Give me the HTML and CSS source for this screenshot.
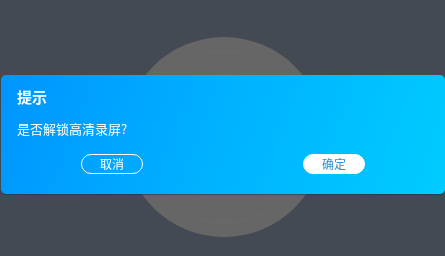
FILE: index.html
```html
<!DOCTYPE html>
<html>
<head>
    <meta charset="utf-8">
    <link rel="stylesheet" href="styles.css">
</head>
<body>
    <div class="stage">
        <svg class="dial" width="200" height="200" viewBox="0 0 200 200">
            <circle cx="100" cy="100" r="100" fill="#666666"/>
            <circle cx="100" cy="100" r="86" fill="none" stroke="#6b6b6b" stroke-width="1"/>
            <line x1="100" y1="60" x2="100" y2="200" stroke="#6b6b6b" stroke-width="1"/>
        </svg>
    </div>

    <div class="modal">
        <div class="modal-content">
            <div class="title">提示</div>
            <div class="message">是否解锁高清录屏?</div>
            <div class="actions">
                <div class="slot"><button class="btn btn-cancel">取消</button></div>
                <div class="slot"><button class="btn btn-ok">确定</button></div>
            </div>
        </div>
    </div>
</body>
</html>
```

FILE: styles.css
```css
body {
    margin: 0;
    background-color: #434a54;
    font-family: "Noto Sans CJK SC", "Noto Sans", sans-serif;
}

.stage {
    height: 256px;
    display: flex;
    justify-content: center;
}

.dial {
    margin-top: 37px;
    margin-left: 3px;
}

.modal {
    position: fixed;
    top: 75px;
    left: 1px;
    width: 444px;
}

.modal-content {
    height: 119px;
    box-sizing: border-box;
    padding: 11px 16px 0;
    border-radius: 5px;
    background: linear-gradient(110deg, #0095ff 0%, #00b2ff 50%, #00ccff 100%);
    box-shadow: 0 1px 1px rgba(0, 60, 90, 0.5);
    color: white;
}

.title {
    font-size: 15px;
    font-weight: bold;
    line-height: 22px;
}

.message {
    font-size: 13px;
    line-height: 18px;
    margin-top: 12px;
}

.actions {
    display: flex;
    margin: 16px -16px 0;
}

.slot {
    flex: 1;
    display: flex;
    justify-content: center;
}

.btn {
    width: 62px;
    height: 20px;
    padding: 0;
    border-radius: 10px;
    font-family: inherit;
    font-size: 12px;
    line-height: 18px;
    cursor: pointer;
}

.btn-cancel {
    background: transparent;
    border: 1px solid white;
    color: white;
}

.btn-ok {
    background: white;
    border: 1px solid white;
    color: #2d8fd6;
}
```
